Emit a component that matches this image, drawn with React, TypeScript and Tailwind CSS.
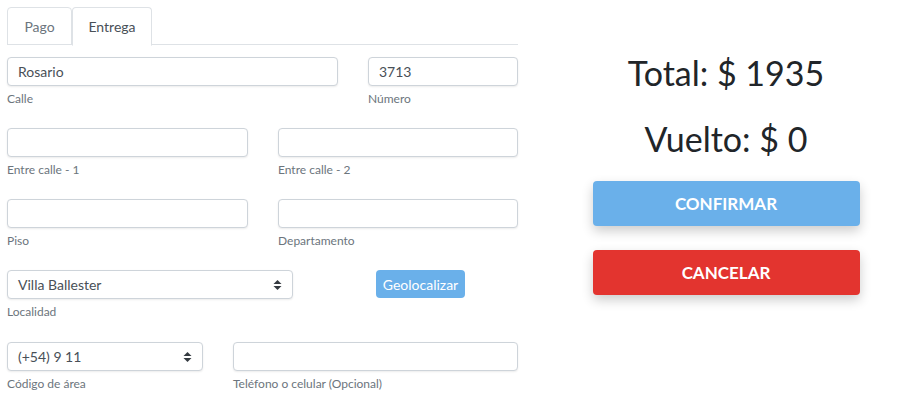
const font = { fontFamily: 'Lato, "Open Sans", sans-serif' };

const Field = ({ label, value, className }: { label: string; value?: string; className: string }) => (
  <div className={className}>
    <div className="h-[29px] rounded-[4px] border border-[#ced4da] bg-white px-[10px] flex items-center text-[14px] text-[#495057] shadow-[0_1px_2px_rgba(0,0,0,0.08)]">
      {value}
    </div>
    <div className="mt-[5px] text-[12px] text-[#6c757d] leading-[16px]">{label}</div>
  </div>
);

const Select = ({ label, value, className }: { label: string; value: string; className: string }) => (
  <div className={className}>
    <div className="h-[29px] rounded-[4px] border border-[#ced4da] bg-white pl-[10px] pr-[10px] flex items-center justify-between text-[14px] text-[#495057] shadow-[0_1px_2px_rgba(0,0,0,0.08)]">
      <span>{value}</span>
      <svg width="9" height="12" viewBox="0 0 9 12"><path d="M4.5 1 L8.5 5 H0.5 Z M4.5 11 L8.5 7 H0.5 Z" fill="#343a40" /></svg>
    </div>
    <div className="mt-[5px] text-[12px] text-[#6c757d] leading-[16px]">{label}</div>
  </div>
);

export default function App() {
  return (
    <div className="w-[914px] h-[412px] bg-white flex" style={font}>
      <div className="w-[518px] pl-[7px] pt-[7px]">
        <div className="flex border-b border-[#dee2e6] h-[38px]">
          <div className="w-[65px] h-[38px] border border-[#dee2e6] rounded-t-[4px] flex items-center justify-center text-[14px] text-[#6c757d]">Pago</div>
          <div className="w-[80px] h-[39px] border border-[#dee2e6] border-b-white rounded-t-[4px] bg-white flex items-center justify-center text-[14px] text-[#495057]">Entrega</div>
        </div>
        <div className="flex gap-[30px] mt-[12px]">
          <Field className="w-[331px]" label="Calle" value="Rosario" />
          <Field className="w-[150px]" label="Número" value="3713" />
        </div>
        <div className="flex gap-[30px] mt-[21px]">
          <Field className="w-[241px]" label="Entre calle - 1" />
          <Field className="w-[240px]" label="Entre calle - 2" />
        </div>
        <div className="flex gap-[30px] mt-[21px]">
          <Field className="w-[241px]" label="Piso" />
          <Field className="w-[240px]" label="Departamento" />
        </div>
        <div className="flex mt-[21px]">
          <Select className="w-[286px]" label="Localidad" value="Villa Ballester" />
          <div className="ml-[83px] h-[28px] w-[89px] rounded-[4px] bg-[#6ab0ea] text-white text-[14px] flex items-center justify-center">Geolocalizar</div>
        </div>
        <div className="flex gap-[30px] mt-[22px]">
          <Select className="w-[196px]" label="Código de área" value="(+54) 9 11" />
          <Field className="w-[285px]" label="Teléfono o celular (Opcional)" />
        </div>
      </div>
      <div className="flex-1 flex flex-col items-center pt-[52px]">
        <div className="text-[34px] leading-[42px] text-[#212529] ml-[20px]">Total: $ 1935</div>
        <div className="text-[34px] leading-[42px] text-[#212529] mt-[24px] ml-[20px]">Vuelto: $ 0</div>
        <div className="w-[267px] ml-[20px] mt-[21px] flex flex-col gap-[24px]">
          <div className="h-[45px] rounded-[4px] bg-[#6ab0ea] text-white text-[17px] font-bold flex items-center justify-center shadow-[0_5px_12px_rgba(0,0,0,0.2)]">CONFIRMAR</div>
          <div className="h-[45px] rounded-[4px] bg-[#e3342f] text-white text-[17px] font-bold flex items-center justify-center shadow-[0_5px_12px_rgba(0,0,0,0.2)]">CANCELAR</div>
        </div>
      </div>
    </div>
  );
}
